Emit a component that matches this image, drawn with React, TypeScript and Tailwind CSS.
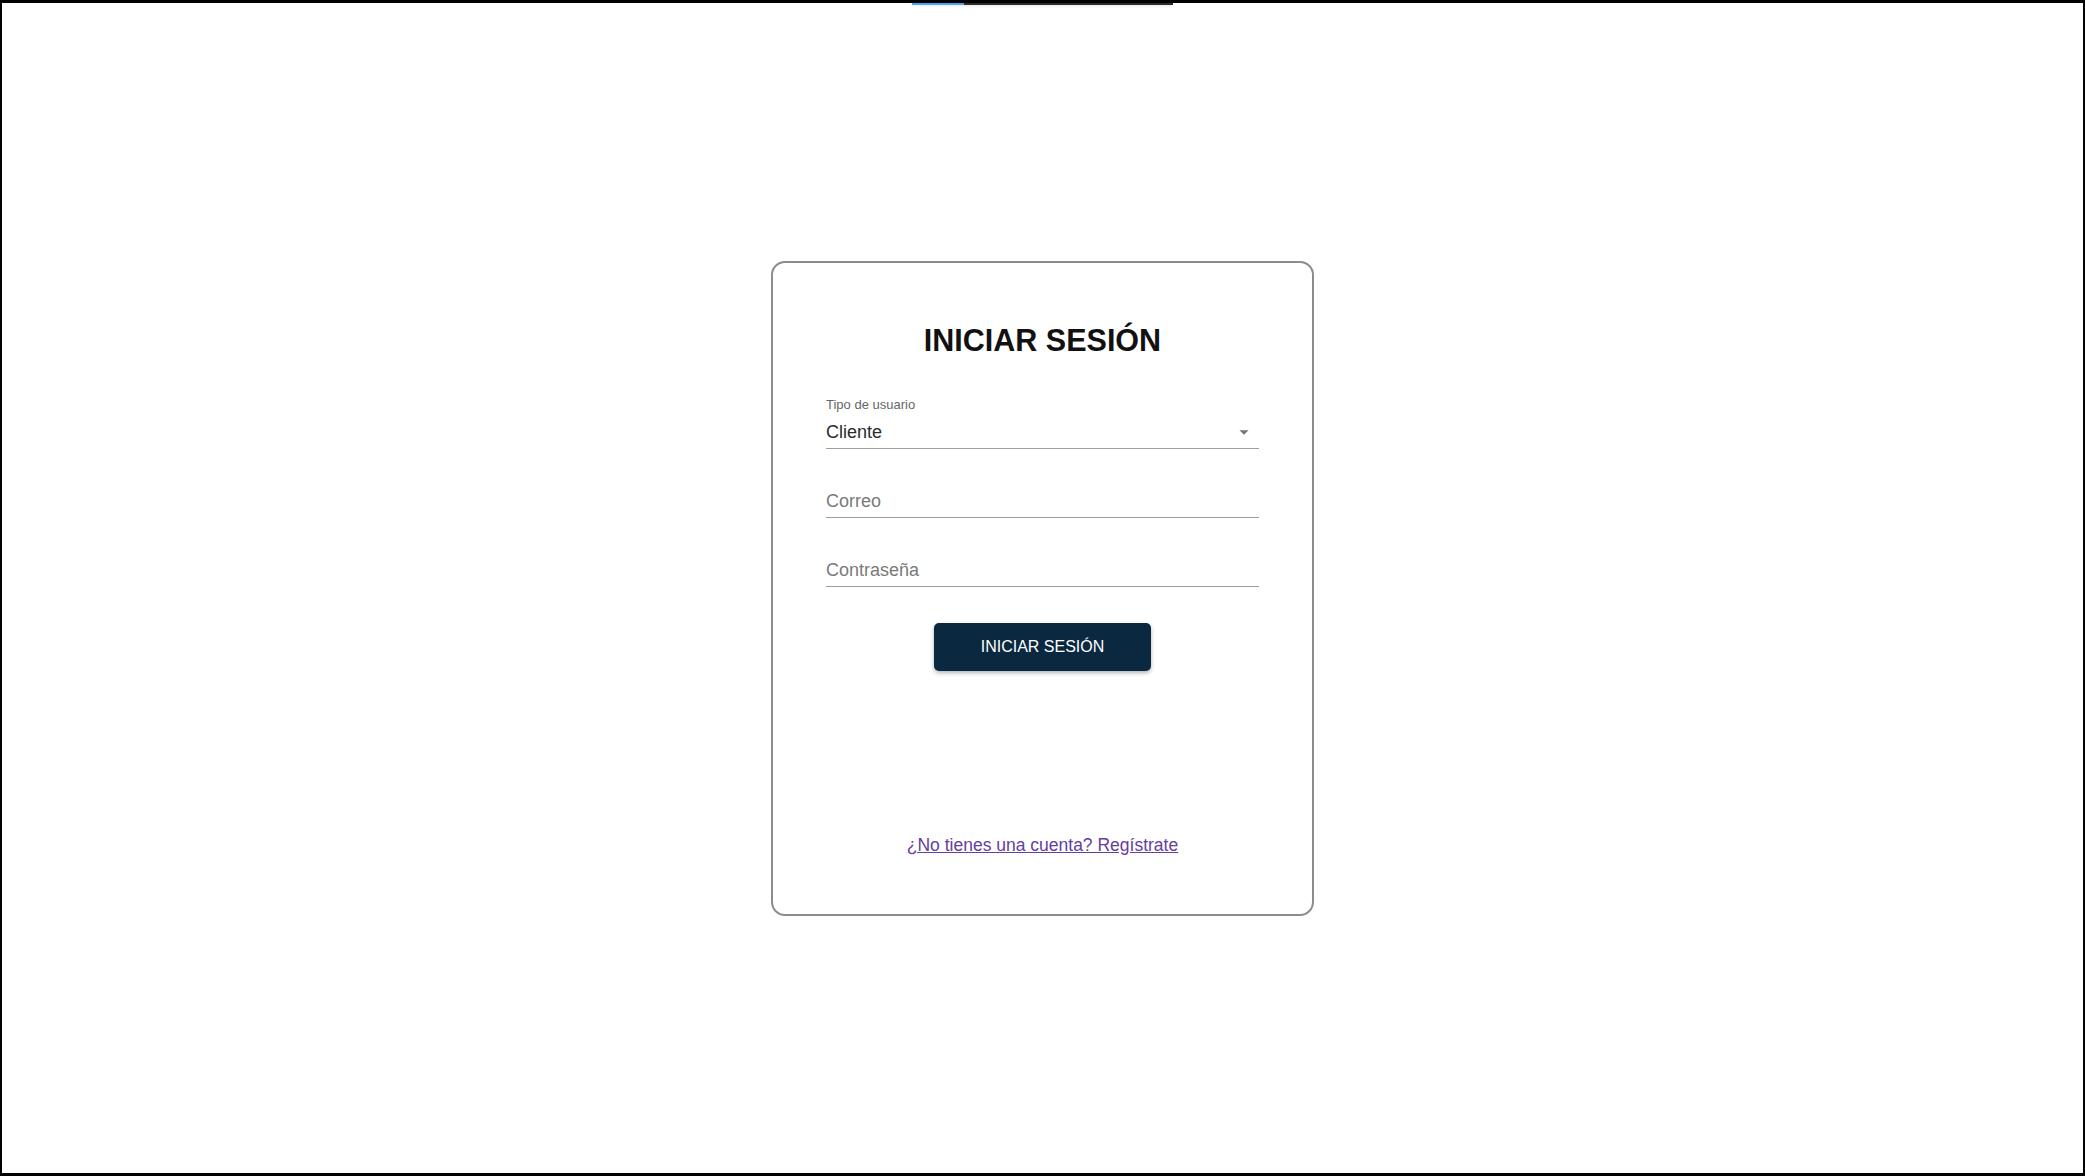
import React, { useState } from "react";

function ArrowDropDown() {
  return (
    <svg width="22" height="22" viewBox="0 0 24 24" className="mr-[4px] shrink-0 text-[#757575]">
      <path d="M7 10l5 5 5-5z" fill="currentColor" />
    </svg>
  );
}

function TextField({ placeholder, type = "text" }: { placeholder: string; type?: string }) {
  return (
    <div className="mt-[40px] border-b border-[#9e9e9e] pb-[4px]">
      <input
        type={type}
        placeholder={placeholder}
        className="block h-[24px] w-full bg-transparent text-[18px] leading-[24px] text-[#333] outline-none placeholder:text-[#7a7a7a]"
      />
    </div>
  );
}

export default function App() {
  const [userType] = useState("Cliente");

  return (
    <div className="flex h-[1176px] flex-col border-x-2 border-y-[3px] border-black bg-white font-['Liberation_Sans',Arial,sans-serif]">
      {/* loading strip */}
      <div className="flex h-[2px] justify-center">
        <div className="flex w-[261px] shadow-sm">
          <div className="w-[52px] bg-[#4aa3f0]" />
          <div className="flex-1 bg-[#2b2b2b]" />
        </div>
      </div>

      <div className="flex flex-1 items-center justify-center pb-[1px]">
        <div className="flex w-[543px] flex-col rounded-[14px] border-2 border-[#8c8c8c] bg-white px-[53px] pt-[59px] pb-[56px]">
          <h1 className="text-center text-[30.5px] font-bold leading-[36px] text-[#111]">INICIAR SESIÓN</h1>

          {/* Tipo de usuario */}
          <div className="mt-[39px]">
            <div className="text-[13px] leading-[16px] text-[#666]">Tipo de usuario</div>
            <div className="mt-[7px] flex items-center justify-between border-b border-[#9e9e9e] pb-[4px]">
              <span className="text-[18px] leading-[24px] text-[#2b2b2b]">{userType}</span>
              <ArrowDropDown />
            </div>
          </div>

          <TextField placeholder="Correo" type="email" />
          <TextField placeholder="Contraseña" type="password" />

          <div className="mt-[36px] flex justify-center">
            <button className="h-[48px] w-[217px] rounded-[5px] bg-[#0a2940] text-[16px] text-white shadow-[0_2px_4px_rgba(0,0,0,0.3)]">
              INICIAR SESIÓN
            </button>
          </div>

          <div className="mt-[163px] text-center">
            <a href="#" className="text-[17.5px] leading-[22px] text-[#6440a0] underline">
              ¿No tienes una cuenta? Regístrate
            </a>
          </div>
        </div>
      </div>
    </div>
  );
}
